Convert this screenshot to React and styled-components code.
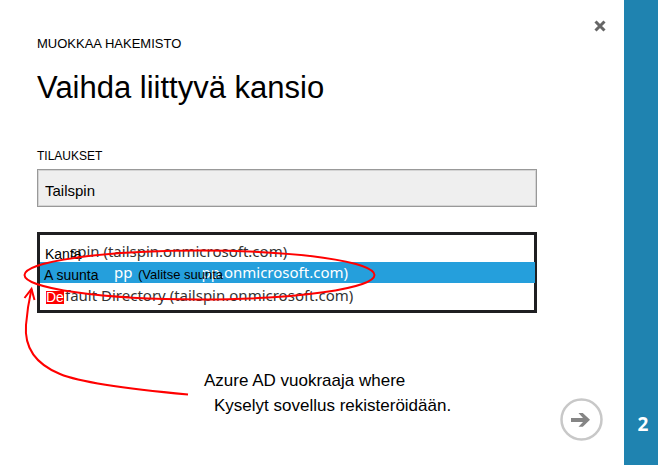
import React from "react";
import styled, { createGlobalStyle, css } from "styled-components";

const GlobalStyle = createGlobalStyle`
  * { box-sizing: border-box; }
  body {
    margin: 0;
    background: #ffffff;
    color: #000000;
    font-family: "Liberation Sans", Arial, sans-serif;
  }
`;

const Page = styled.div`
  display: flex;
  min-height: 100vh;
`;

const Main = styled.main`
  flex: 1;
  min-width: 0;
  padding: 18px 16px 24px 37px;
`;

const StepRail = styled.aside`
  display: flex;
  flex-direction: column;
  justify-content: flex-end;
  align-items: center;
  width: 34px;
  padding: 0 0 28px 4px;
  background: #1f83b0;
  color: #ffffff;
  font: 700 19px/26px "Open Sans", "Noto Sans", sans-serif;
`;

const Header = styled.header`
  display: flex;
  justify-content: space-between;
  align-items: flex-start;
`;

const Eyebrow = styled.p`
  margin: 18px 0 0;
  font-size: 13px;
  line-height: 16px;
`;

const Title = styled.h1`
  margin: 18px 0 0;
  font-size: 31px;
  font-weight: 400;
  line-height: 36px;
`;

const IconButton = styled.button`
  display: flex;
  align-items: center;
  justify-content: center;
  flex: none;
  width: ${(p) => p.$size}px;
  height: ${(p) => p.$size}px;
  padding: 0;
  border: 0;
  background: none;
  cursor: pointer;
`;

const Form = styled.div`
  margin: 42px 71px 0 0;
`;

const Label = styled.label`
  display: block;
  margin-bottom: 5px;
  font-size: 12px;
  line-height: 16px;
`;

const Field = styled.input`
  display: block;
  width: 100%;
  height: 38px;
  padding: 4px 7px 0;
  border: 1px solid #999999;
  border-radius: 0;
  background: #efefef;
  box-shadow: inset 0 0 0 1px #d4d4d4;
  color: #000000;
  font: 15px "Liberation Sans", Arial, sans-serif;
  outline: none;
`;

const Picker = styled.div`
  position: relative;
  margin-top: 25px;
`;

const List = styled.ul`
  margin: 0;
  padding: 6px 0 4px;
  border: 3px solid #1f1f21;
  list-style: none;
`;

const Option = styled.li`
  position: relative;
  display: flex;
  gap: 69px;
  padding-left: ${(p) => p.$indent}px;
  color: #333333;
  font: 15px/21px "Noto Sans", "Open Sans", sans-serif;
  white-space: nowrap;
  &:last-child {
    padding-top: 2px;
  }
  ${(p) =>
    p.$selected &&
    css`
      margin-right: -1px;
      background: #259fdc;
      color: #ffffff;
    `}
`;

const Overlay = styled.span`
  position: absolute;
  top: 3px;
  left: ${(p) => p.$left}px;
  color: #000000;
  font-family: "Liberation Sans", Arial, sans-serif;
  font-size: ${(p) => (p.$small ? 13 : 14)}px;
  line-height: 20px;
`;

const Tag = styled(Overlay)`
  top: 8px;
  background: #ff0000;
  color: #ffffff;
  line-height: 13px;
`;

const Marks = styled.svg`
  position: absolute;
  top: 0;
  left: -37px;
  overflow: visible;
  pointer-events: none;
`;

const Footer = styled.footer`
  display: flex;
  justify-content: space-between;
  align-items: flex-start;
  margin: 55px 5px 0 0;
  padding-left: 167px;
`;

const Callout = styled.p`
  margin: 0;
  font-size: 17px;
  line-height: 25px;
`;

const CalloutLine = styled.span`
  display: block;
  padding-left: ${(p) => (p.$indented ? 10 : 0)}px;
`;

const NextButton = styled(IconButton)`
  margin-top: 30px;
`;

export default function App() {
  return (
    <Page>
      <GlobalStyle />
      <Main>
        <Header>
          <div>
            <Eyebrow>MUOKKAA HAKEMISTO</Eyebrow>
            <Title>Vaihda liittyvä kansio</Title>
          </div>
          <IconButton type="button" aria-label="Sulje" $size={16}>
            <svg width="12" height="12" viewBox="0 0 12 12">
              <path d="M1.5 1.5L10.5 10.5M10.5 1.5L1.5 10.5" stroke="#666666" strokeWidth="3" />
            </svg>
          </IconButton>
        </Header>

        <Form>
          <Label htmlFor="subscription">TILAUKSET</Label>
          <Field id="subscription" defaultValue="Tailspin" />

          <Picker>
            <List role="listbox" aria-label="Kansio">
              <Option role="option" aria-selected="false" $indent={30}>
                spin (tailspin.onmicrosoft.com)
                <Overlay $left={5}>Kanta</Overlay>
              </Option>
              <Option role="option" aria-selected="true" $selected $indent={74}>
                <span>pp</span>
                <span>pp.onmicrosoft.com)</span>
                <Overlay $left={4}>A suunta</Overlay>
                <Overlay $left={98} $small>(Valitse suunta</Overlay>
              </Option>
              <Option role="option" aria-selected="false" $indent={25}>
                fault Directory (tailspin.onmicrosoft.com)
                <Tag $left={6}>De</Tag>
              </Option>
            </List>
            <Marks width="380" height="170" fill="none" stroke="#ff0000" strokeWidth="2" aria-hidden="true">
              <ellipse cx="199.5" cy="43" rx="175" ry="24.5" />
              <path d="M188 162.5C150 159 84 152 60 142C38 133 24 118 26 93C27 80 29 68 31.5 57" />
              <path d="M24.5 66L31.5 57L34.5 68" />
            </Marks>
          </Picker>
        </Form>

        <Footer>
          <Callout>
            <CalloutLine>Azure AD vuokraaja where</CalloutLine>
            <CalloutLine $indented>Kyselyt sovellus rekisteröidään.</CalloutLine>
          </Callout>
          <NextButton type="button" aria-label="Seuraava" $size={43}>
            <svg width="43" height="43" viewBox="0 0 43 43" fill="none">
              <circle cx="21.5" cy="21.5" r="20" stroke="#c8c8c8" strokeWidth="2.5" />
              <path d="M11 20H23L18.5 15H22.8L30 21.8L22.8 28.8H18.5L23 24H11Z" fill="#858585" />
            </svg>
          </NextButton>
        </Footer>
      </Main>
      <StepRail>2</StepRail>
    </Page>
  );
}
